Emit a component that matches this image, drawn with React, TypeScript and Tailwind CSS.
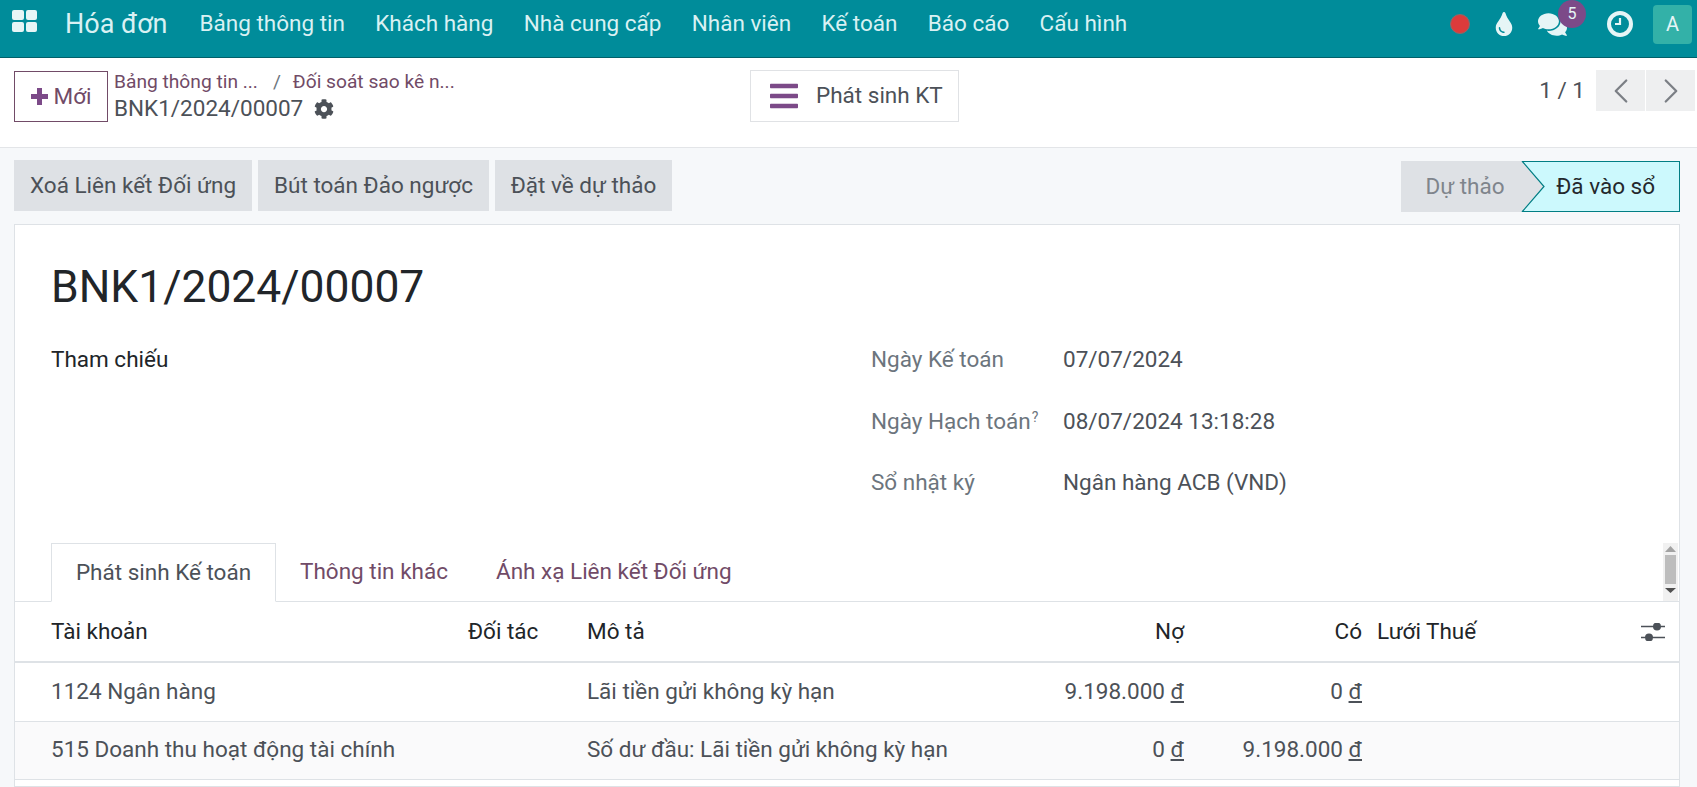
import React from "react";
import { FaCog, FaBars, FaTint, FaComments } from "react-icons/fa";
import { ChevronLeft, ChevronRight } from "lucide-react";

const nav = ["Bảng thông tin", "Khách hàng", "Nhà cung cấp", "Nhân viên", "Kế toán", "Báo cáo", "Cấu hình"];

function Field({ label, value, sup }: { label: string; value: string; sup?: boolean }) {
  return (
    <div className="flex h-[61.5px] items-start">
      <div className="w-[192px] text-[#6c757d]">
        {label}
        {sup && <sup className="ml-px text-[14px]">?</sup>}
      </div>
      <div className="text-[#4c5158]">{value}</div>
    </div>
  );
}

function Sliders() {
  return (
    <svg width="24" height="18" viewBox="0 0 24 18" fill="none">
      <path d="M0 3.5H24M0 14.5H24" stroke="#4c5158" strokeWidth="1.6" />
      <circle cx="16" cy="3.5" r="4" fill="#4c5158" />
      <circle cx="8" cy="14.5" r="4" fill="#4c5158" />
    </svg>
  );
}

function Row({ a, m, d, c, alt }: { a: string; m: string; d: string; c: string; alt?: boolean }) {
  return (
    <div className={`flex h-[58.5px] shrink-0 items-center border-b border-[#dee2e6] pl-[36px] text-[#4c5158] ${alt ? "bg-[#fafafb]" : "bg-white"}`}>
      <div className="w-[536px]">{a}</div>
      <div className="w-[429px]">{m}</div>
      <div className="w-[168px] text-right">{d} <u>đ</u></div>
      <div className="w-[178px] text-right">{c} <u>đ</u></div>
    </div>
  );
}

export default function App() {
  return (
    <div className="flex h-[787px] w-[1697px] flex-col overflow-hidden bg-[#f6f8fa] font-['Roboto',sans-serif] text-[22.5px] text-[#4c5158]">
      <header className="flex h-[58px] shrink-0 items-center border-b border-[#01606a] bg-[#008c9a] pb-[9px] text-[#d9f1f3]">
        <div className="ml-[12px] grid h-[22px] w-[25px] -translate-y-[3px] grid-cols-2 gap-[2px]">
          <span className="rounded-[2px] bg-[#e6f5f6]" />
          <span className="rounded-[2px] bg-[#e6f5f6]" />
          <span className="rounded-[2px] bg-[#e6f5f6]" />
          <span className="rounded-[2px] bg-[#e6f5f6]" />
        </div>
        <div className="ml-[28px] text-[27px]">Hóa đơn</div>
        <nav className="ml-[32px] flex gap-[30.3px]">
          {nav.map((n) => (
            <span key={n}>{n}</span>
          ))}
        </nav>
        <div className="ml-auto flex items-center">
          <span className="h-[20px] w-[20px] rounded-full border border-[#8a6a6a] bg-[#dc3b3b]" />
          <FaTint className="ml-[22px] text-[#e6f5f6]" size={24} />
          <div className="relative ml-[22px]">
            <FaComments className="text-[#e6f5f6]" size={29} />
            <span className="absolute -right-[19px] -top-[10px] flex h-[28px] w-[28px] items-center justify-center rounded-full bg-[#7c4a88] text-[16px] text-[#e6f5f6]">5</span>
          </div>
          <span className="relative ml-[40px] h-[26px] w-[26px] rounded-full border-[4px] border-[#e6f5f6]">
            <svg className="absolute left-[3px] top-[2px]" width="10" height="11" viewBox="0 0 10 11" fill="none">
              <path d="M6 1V7H1" stroke="#e6f5f6" strokeWidth="2.2" />
            </svg>
          </span>
          <span className="ml-[20px] mr-[5px] flex h-[39px] w-[39px] items-center justify-center rounded-[4px] bg-[#33b1a8] text-[20px] text-[#e6f5f6]">A</span>
        </div>
      </header>

      <section className="flex h-[90px] shrink-0 border-b border-[#e3e5e8] bg-white">
        <button className="ml-[14px] mt-[13px] flex h-[51px] w-[94px] items-center justify-center gap-[6px] border border-[#714b67] text-[#714b67]">
          <svg width="17" height="17" viewBox="0 0 17 17"><path d="M6 0H11V6H17V11H11V17H6V11H0V6H6Z" fill="#7c4a88" /></svg>
          <span>Mới</span>
        </button>
        <div className="ml-[6px] mt-[11px] w-[636px]">
          <div className="flex h-[27px] items-center text-[19.2px] text-[#714b67]">
            <span>Bảng thông tin ...</span>
            <span className="ml-[15px] mr-[12px] text-[#6c757d]">/</span>
            <span>Đối soát sao kê n...</span>
          </div>
          <div className="flex h-[26px] items-center">
            <span>BNK1/2024/00007</span>
            <FaCog size={20} className="ml-[11px] text-[#4c5158]" />
          </div>
        </div>
        <button className="mt-[12px] flex h-[52px] w-[209px] items-center border border-[#e0e2e5] pl-[17px]">
          <FaBars size={32} className="text-[#7c4a88]" />
          <span className="ml-[16px]">Phát sinh KT</span>
        </button>
        <div className="ml-auto mr-[2px] mt-[12px] flex h-[41px] items-center">
          <span className="mr-[11px]">1 / 1</span>
          <span className="flex h-[41px] w-[49px] items-center justify-center bg-[#eeeff0] text-[#7b7f85]">
            <ChevronLeft size={42} strokeWidth={1.3} className="shrink-0" />
          </span>
          <span className="ml-[1px] flex h-[41px] w-[49px] items-center justify-center bg-[#eeeff0] text-[#7b7f85]">
            <ChevronRight size={42} strokeWidth={1.3} className="shrink-0" />
          </span>
        </div>
      </section>

      <section className="flex h-[76px] shrink-0 items-start gap-[6px] pl-[14px] pr-[17px] pt-[12px]">
        <button className="h-[51px] w-[238px] bg-[#dee1e5]">Xoá Liên kết Đối ứng</button>
        <button className="h-[51px] w-[231px] bg-[#dee1e5]">Bút toán Đảo ngược</button>
        <button className="h-[51px] w-[177px] bg-[#dee1e5]">Đặt về dự thảo</button>
        <div className="relative ml-auto mt-[1px] flex h-[51px] w-[279px]">
          <div className="flex w-[121px] items-center justify-center bg-[#dee1e5] pl-[7px] text-[#7f858c]">Dự thảo</div>
          <div className="flex flex-1 items-center justify-end border border-[#017e84] bg-[#ccf9fd] pr-[24px] text-[#24282c]">Đã vào sổ</div>
          <svg className="absolute left-[120px] top-0" width="24" height="51" viewBox="0 0 24 51">
            <polygon points="0,0 1,0 23,25.5 1,51 0,51" fill="#dee1e5" />
            <path d="M1 0L23 25.5L1 51" fill="none" stroke="#017e84" strokeWidth="1.2" />
          </svg>
        </div>
      </section>

      <main className="ml-[14px] mr-[17px] flex flex-1 flex-col border border-[#dee2e6] bg-white">
        <h1 className="ml-[36px] mt-[33px] h-[58px] text-[44.4px] leading-[58px] text-[#212529]">BNK1/2024/00007</h1>
        <div className="mt-[27px] flex h-[200px] pl-[36px]">
          <div className="w-[820px] text-[#212529]">Tham chiếu</div>
          <div className="flex-1">
            <Field label="Ngày Kế toán" value="07/07/2024" />
            <Field label="Ngày Hạch toán" sup value="08/07/2024 13:18:28" />
            <Field label="Sổ nhật ký" value="Ngân hàng ACB (VND)" />
          </div>
        </div>
        <div className="relative flex h-[59px] shrink-0 border-b border-[#dee2e6] pl-[36px]">
          <div className="relative -mb-px flex h-[59px] w-[225px] items-center justify-center border border-[#dee2e6] border-b-white bg-white">Phát sinh Kế toán</div>
          <div className="ml-[24px] flex items-center text-[#714b67]">Thông tin khác</div>
          <div className="ml-[48px] flex items-center text-[#714b67]">Ánh xạ Liên kết Đối ứng</div>
          <div className="absolute right-[1px] top-0 flex h-[58px] w-[15px] flex-col items-center bg-[#f1f1f1]">
            <svg className="mt-[3px]" width="11" height="6" viewBox="0 0 11 6"><polygon points="5.5,0 11,6 0,6" fill="#a3a3a3" /></svg>
            <span className="mt-[3px] h-[29px] w-[11px] bg-[#bdbdbd]" />
            <svg className="mt-[4px]" width="11" height="5" viewBox="0 0 11 5"><polygon points="0,0 11,0 5.5,5" fill="#505050" /></svg>
          </div>
        </div>
        <div className="flex h-[61px] shrink-0 items-center border-b-2 border-[#dee2e6] pl-[36px] text-[#212529]">
          <div className="w-[417px]">Tài khoản</div>
          <div className="w-[119px]">Đối tác</div>
          <div className="w-[429px]">Mô tả</div>
          <div className="w-[168px] text-right">Nợ</div>
          <div className="w-[178px] text-right">Có</div>
          <div className="ml-[15px]">Lưới Thuế</div>
          <div className="ml-auto mr-[14px]"><Sliders /></div>
        </div>
        <Row a="1124 Ngân hàng" m="Lãi tiền gửi không kỳ hạn" d="9.198.000" c="0" />
        <Row a="515 Doanh thu hoạt động tài chính" m="Số dư đầu: Lãi tiền gửi không kỳ hạn" d="0" c="9.198.000" alt />
      </main>
    </div>
  );
}
